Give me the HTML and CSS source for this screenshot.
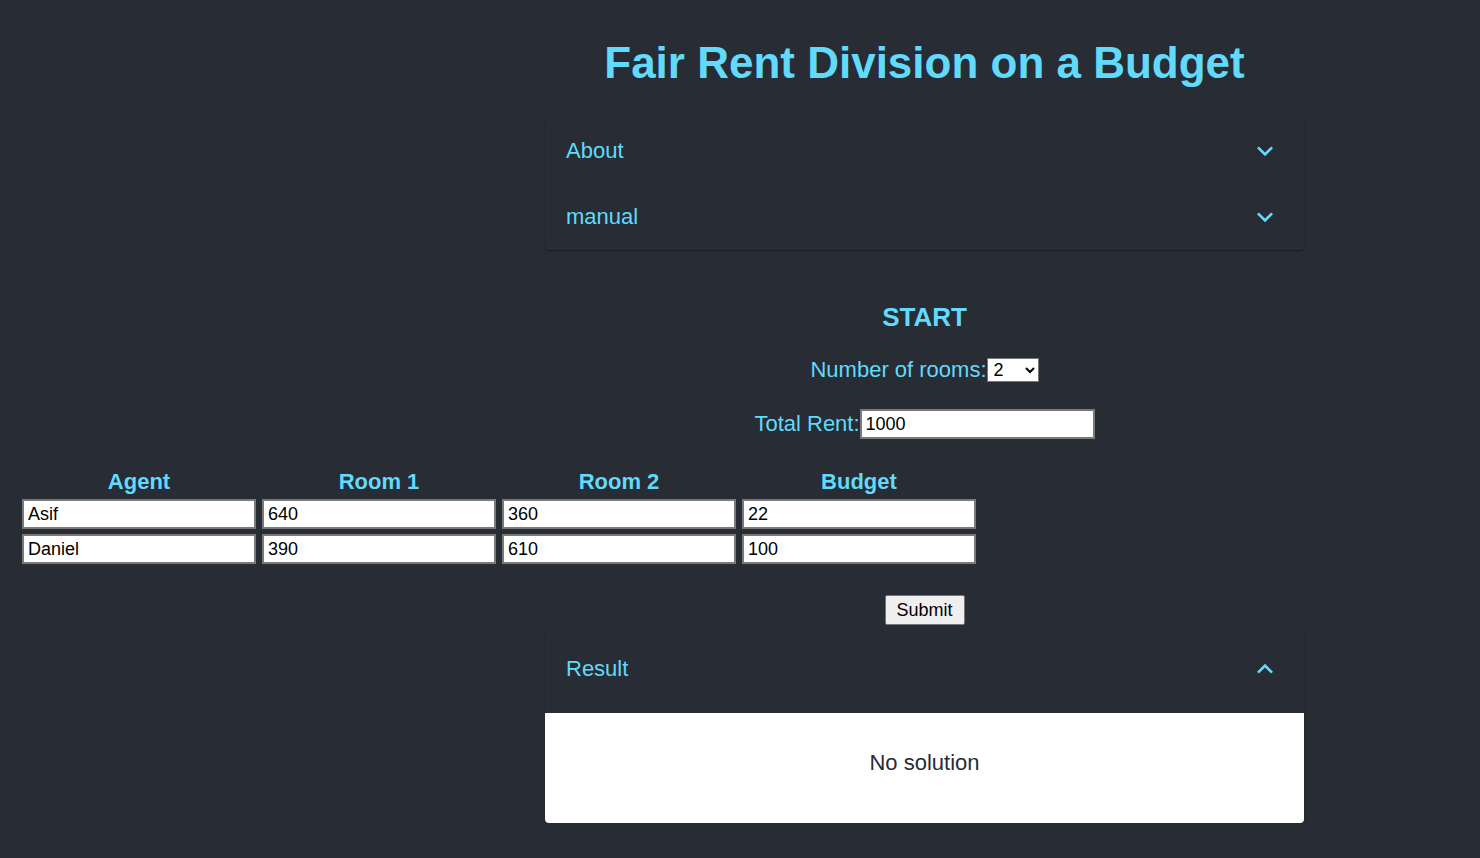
FILE: index.html
```html
<!DOCTYPE html>
<html lang="en">
<head>
<meta charset="utf-8">
<title>Fair Rent Division on a Budget</title>
<link rel="stylesheet" href="styles.css">
</head>
<body>
<div class="app">
  <section class="column">
    <h1 class="title">Fair Rent Division on a Budget</h1>
    <div class="accordion">
      <div class="summary">
        <span class="summary-text">About</span>
        <svg class="chev" viewBox="0 0 24 24"><path d="M16.59 8.59 12 13.17 7.41 8.59 6 10l6 6 6-6z"/></svg>
      </div>
      <div class="summary">
        <span class="summary-text">manual</span>
        <svg class="chev" viewBox="0 0 24 24"><path d="M16.59 8.59 12 13.17 7.41 8.59 6 10l6 6 6-6z"/></svg>
      </div>
    </div>
    <h2 class="start">START</h2>
    <div class="field">
      <label class="field-label">Number of rooms:</label>
      <select class="rooms"><option>2</option></select>
    </div>
    <div class="field field-rent">
      <label class="field-label">Total Rent:</label>
      <input class="rent" type="text" value="1000">
    </div>
  </section>

  <section class="grid">
    <div class="th">Agent</div>
    <div class="th">Room 1</div>
    <div class="th">Room 2</div>
    <div class="th">Budget</div>
    <input class="cell" type="text" value="Asif">
    <input class="cell" type="text" value="640">
    <input class="cell" type="text" value="360">
    <input class="cell" type="text" value="22">
    <input class="cell" type="text" value="Daniel">
    <input class="cell" type="text" value="390">
    <input class="cell" type="text" value="610">
    <input class="cell" type="text" value="100">
  </section>

  <section class="column">
    <div class="submit-row"><button class="submit">Submit</button></div>
    <div class="accordion result">
      <div class="summary summary-open">
        <span class="summary-text">Result</span>
        <svg class="chev" viewBox="0 0 24 24"><path d="M12 8l-6 6 1.41 1.41L12 10.83l4.59 4.58L18 14z"/></svg>
      </div>
      <div class="result-body">No solution</div>
    </div>
  </section>
</div>
</body>
</html>
```

FILE: styles.css
```css
html, body {
  margin: 0;
  padding: 0;
  background: #282c34;
}
body {
  font-family: "Liberation Sans", Arial, sans-serif;
  color: #61dafb;
  overflow: hidden;
}
.app {
  display: flex;
  flex-direction: column;
  padding-top: 38px;
}
.column {
  margin-left: 545px;
  width: 759px;
  display: flex;
  flex-direction: column;
  align-items: stretch;
}
.title {
  margin: 0;
  font-size: 44px;
  line-height: 50px;
  font-weight: bold;
  text-align: center;
}
.accordion {
  margin-top: 30px;
  background: #282c34;
  border-radius: 4px;
  box-shadow: 0 2px 1px -1px rgba(0,0,0,0.2), 0 1px 1px 0 rgba(0,0,0,0.14), 0 1px 3px 0 rgba(0,0,0,0.12);
}
.summary {
  height: 66px;
  display: flex;
  align-items: center;
  justify-content: space-between;
  padding: 0 23px 0 21px;
}
.summary-text {
  font-size: 22px;
}
.chev {
  width: 32px;
  height: 32px;
  fill: #61dafb;
}
.start {
  margin: 51px 0 0;
  font-size: 26px;
  line-height: 32px;
  font-weight: bold;
  text-align: center;
}
.field {
  display: flex;
  justify-content: center;
  align-items: center;
  margin-top: 24px;
}
.field-rent {
  margin-top: 26px;
}
.field-label {
  font-size: 22px;
  line-height: 26px;
}
.rooms {
  width: 52px;
  height: 24px;
  font-family: "Liberation Sans", Arial, sans-serif;
  font-size: 18px;
  color: #000;
  background: #fff;
  border: 1px solid #767676;
  border-radius: 0;
  padding: 0 2px;
}
.rent, .cell {
  box-sizing: border-box;
  height: 30px;
  font-family: "Liberation Sans", Arial, sans-serif;
  font-size: 18px;
  color: #000;
  background: #fff;
  border: 2px solid #7a7a7a;
  padding: 2px 4px 1px;
  margin: 0;
}
.rent {
  width: 235px;
}
.grid {
  margin-left: 22px;
  margin-top: 30px;
  display: grid;
  grid-template-columns: repeat(4, 234px);
  column-gap: 6px;
  row-gap: 5px;
  width: max-content;
}
.th {
  font-size: 22px;
  font-weight: bold;
  text-align: center;
  line-height: 26px;
  margin-bottom: -1px;
}
.submit-row {
  display: flex;
  justify-content: center;
  margin-top: 31px;
}
.submit {
  width: 80px;
  height: 30px;
  font-family: "Liberation Sans", Arial, sans-serif;
  font-size: 18px;
  color: #000;
  background: #efefef;
  border: 1px solid #767676;
  border-radius: 2px;
  padding: 0;
}
.result {
  margin-top: 5px;
}
.summary-open {
  height: 83px;
  box-sizing: border-box;
  padding-bottom: 6px;
}
.result-body {
  box-sizing: border-box;
  background: #fff;
  color: #282c34;
  height: 110px;
  padding-bottom: 11px;
  display: flex;
  align-items: center;
  justify-content: center;
  font-size: 22px;
  border-radius: 0 0 4px 4px;
}
```
